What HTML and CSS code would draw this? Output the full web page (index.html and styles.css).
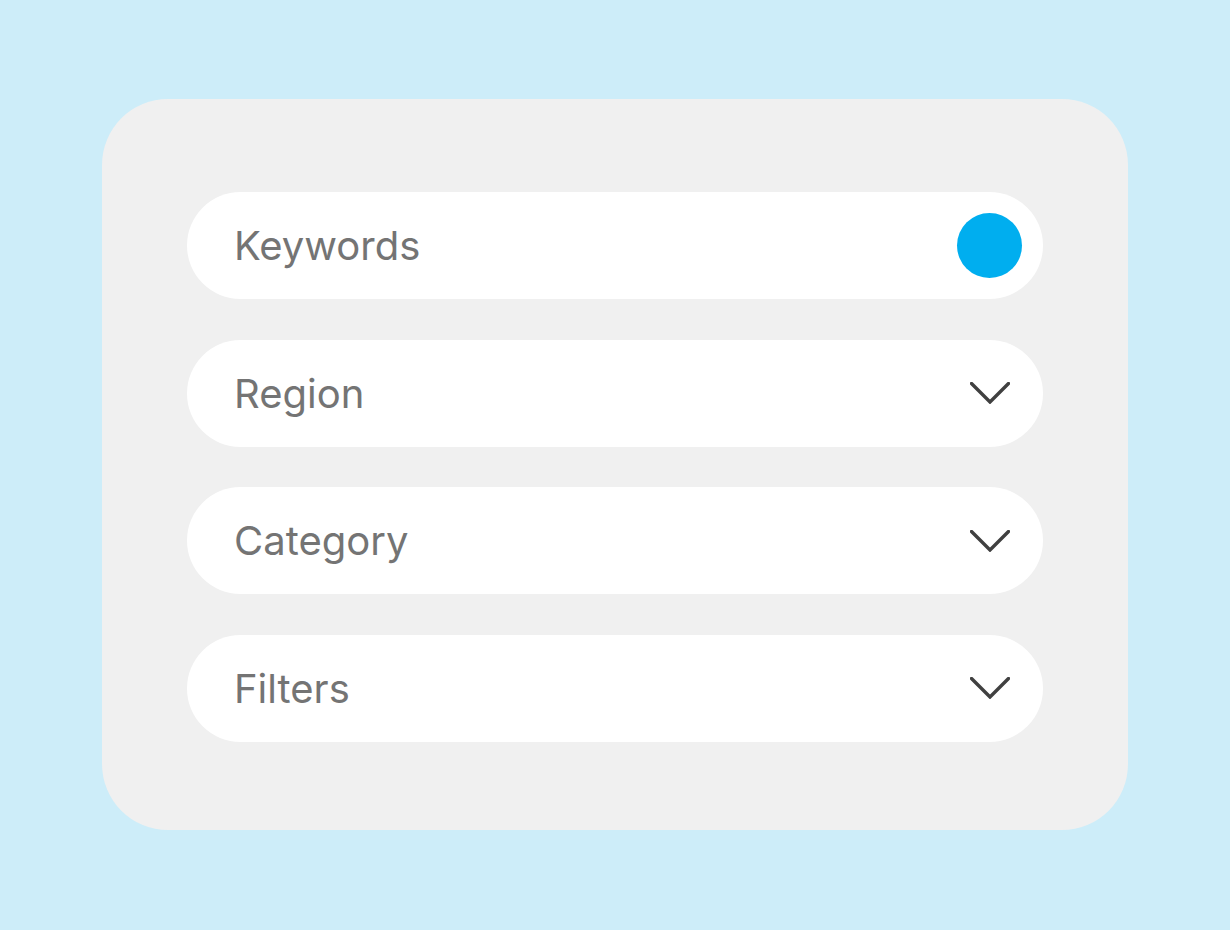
FILE: index.html
```html
<!DOCTYPE html>
<html lang="en">

<head>
  <meta charset="UTF-8" />
  <meta name="viewport" content="width=device-width, initial-scale=1.0" />
  <title>Search form</title>
  <link rel="stylesheet" href="styles.css">
</head>

<body>
  <div class="panel">
    <div class="field">
      <span class="label">Keywords</span>
      <span class="dot"></span>
    </div>
    <div class="field">
      <span class="label">Region</span>
      <svg class="chevron" viewBox="0 0 40 22" width="40" height="22">
        <path d="M1.5 1.5 L20 20 L38.5 1.5" />
      </svg>
    </div>
    <div class="field">
      <span class="label">Category</span>
      <svg class="chevron" viewBox="0 0 40 22" width="40" height="22">
        <path d="M1.5 1.5 L20 20 L38.5 1.5" />
      </svg>
    </div>
    <div class="field">
      <span class="label">Filters</span>
      <svg class="chevron" viewBox="0 0 40 22" width="40" height="22">
        <path d="M1.5 1.5 L20 20 L38.5 1.5" />
      </svg>
    </div>
  </div>
</body>

</html>
```

FILE: styles.css
```css
* {
  box-sizing: border-box;
}

html,
body {
  height: 100%;
}

body {
  margin: 0;
  padding: 99px 0 0 102px;
  background-color: #cdedf9;
  font-family: Inter, "Noto Sans", sans-serif;
}

.panel {
  display: flex;
  flex-direction: column;
  gap: 40.6px;
  width: 1026px;
  height: 731px;
  padding: 93px 85px 0;
  background-color: #f0f0f0;
  border-radius: 66px;
}

.field {
  display: flex;
  align-items: center;
  justify-content: space-between;
  height: 107px;
  padding: 0 33px 0 47px;
  background-color: #fff;
  border-radius: 54px;
}

.label {
  color: #747474;
  font-size: 40px;
}

.dot {
  width: 65px;
  height: 65px;
  margin-right: -12px;
  background-color: #00aeef;
  border-radius: 50%;
}

.chevron {
  fill: none;
  stroke: #404040;
  stroke-width: 3.4;
  stroke-linecap: round;
  stroke-linejoin: miter;
}
```
